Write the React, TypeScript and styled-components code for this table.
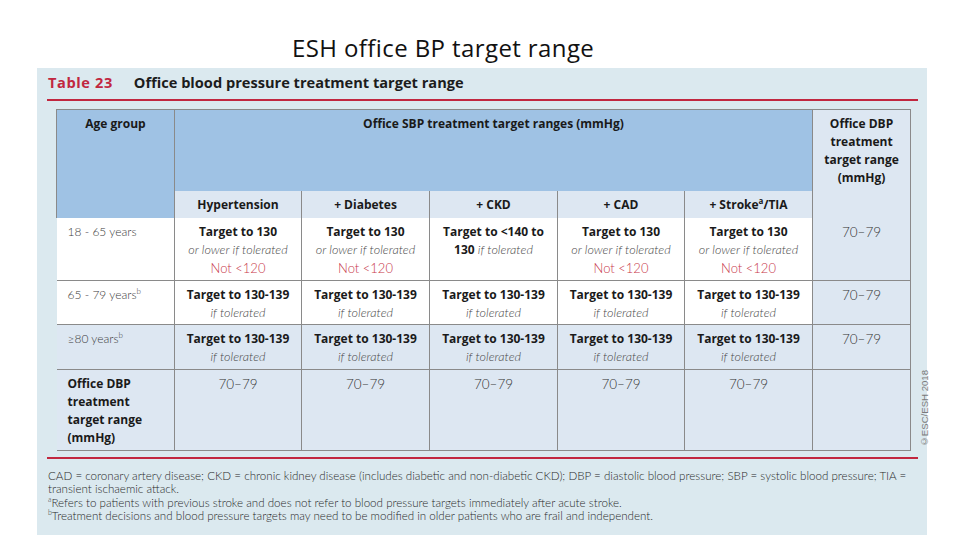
import styled, { createGlobalStyle } from "styled-components";

const GlobalStyle = createGlobalStyle`
  html, body {
    margin: 0;
    padding: 0;
    background: #ffffff;
  }
  body {
    width: 960px;
    height: 540px;
    overflow: hidden;
  }
`;

const Page = styled.div`
  width: 960px;
  height: 540px;
  display: flex;
  flex-direction: column;
`;

const SlideTitle = styled.h1`
  margin: 0;
  height: 68px;
  box-sizing: border-box;
  padding: 33px 0 0 292px;
  font-family: "Open Sans", "Noto Sans", sans-serif;
  font-weight: 400;
  font-size: 24px;
  line-height: 30px;
  color: #111;
  letter-spacing: 0.4px;
`;

const Panel = styled.div`
  margin-left: 37px;
  width: 890px;
  height: 467px;
  box-sizing: border-box;
  padding: 0 9px 0 10px;
  background: #dbe9ef;
  display: flex;
  flex-direction: column;
  font-family: Lato, "Open Sans", sans-serif;
`;

const Caption = styled.div`
  height: 33px;
  display: flex;
  align-items: center;
  gap: 21px;
  padding: 0 0 3px 1px;
  box-sizing: border-box;
  font-family: "Open Sans", sans-serif;
  font-weight: 700;
  font-size: 14.6px;
  color: #1c1c1c;
  border-bottom: 2px solid #c1273f;
`;

const TableNo = styled.span`
  color: #c1273f;
  letter-spacing: 0.6px;
`;

const Body = styled.div`
  display: flex;
  align-items: flex-end;
  padding: 8px 0 0 9px;
`;

const Table = styled.table`
  border-collapse: collapse;
  table-layout: fixed;
  width: 854px;
  font-size: 12px;
  color: #1a1a1a;
  border-top: 1px solid #8a8a8a;
  border-bottom: 1px solid #8a8a8a;
  border-right: 1px solid #8a8a8a;
`;

const HeadCell = styled.th<{ $tone: "dark" | "light" }>`
  background: ${(p) => (p.$tone === "dark" ? "#9fc2e4" : "#dde7f2")};
  border-left: 1px solid #8a8a8a;
  border-right: 1px solid #8a8a8a;
  font-family: "Open Sans", sans-serif;
  font-weight: 700;
  font-size: 12px;
  line-height: 18px;
  padding: 5px 2px 0;
  vertical-align: top;
  text-align: center;
`;

const SubHead = styled.th`
  background: #dde7f2;
  border-left: 1px solid #8a8a8a;
  border-right: 1px solid #8a8a8a;
  font-family: "Open Sans", sans-serif;
  font-weight: 700;
  font-size: 12px;
  height: 27px;
  padding: 0 2px;
  vertical-align: middle;
  text-align: center;
`;

const Row = styled.tr<{ $tone: "white" | "light"; $h: number; $ruled?: boolean }>`
  height: ${(p) => p.$h}px;
  background: ${(p) => (p.$tone === "white" ? "#ffffff" : "#dde7f2")};
  td {
    border-top: ${(p) => (p.$ruled ? "1px solid #8a8a8a" : "none")};
  }
`;

const Cell = styled.td<{ $dbp?: boolean }>`
  background: ${(p) => (p.$dbp ? "#dde7f2" : "transparent")};
  border-left: 1px solid #8a8a8a;
  border-right: 1px solid #8a8a8a;
  vertical-align: top;
  text-align: center;
  padding: 5px 1px 0;
  line-height: 18px;
`;

const AgeCell = styled.td<{ $bold?: boolean }>`
  border-right: 1px solid #8a8a8a;
  vertical-align: top;
  text-align: left;
  padding: 5px 4px 0 11px;
  line-height: 18px;
  font-family: ${(p) => (p.$bold ? `"Open Sans", sans-serif` : `Lato, sans-serif`)};
  font-weight: ${(p) => (p.$bold ? 700 : 300)};
  font-size: 12px;
  color: ${(p) => (p.$bold ? "#1a1a1a" : "#3a3a3a")};
`;

const Strong = styled.div`
  font-family: "Open Sans", sans-serif;
  font-weight: 700;
  white-space: nowrap;
`;

const Note = styled.div`
  font-style: italic;
  font-weight: 300;
  font-size: 12.6px;
  color: #4a4a4a;
  white-space: nowrap;
`;

const Warn = styled.div`
  font-weight: 300;
  font-size: 13px;
  color: #c8384a;
`;

const Range = styled.span`
  font-weight: 300;
  font-size: 13.5px;
  color: #333;
`;

const Sup = styled.sup`
  font-size: 8px;
  line-height: 0;
`;

const Copyright = styled.div`
  writing-mode: vertical-rl;
  transform: rotate(180deg);
  margin: 0 0 4px 8px;
  font-family: "Liberation Sans", Arial, sans-serif;
  font-size: 9.6px;
  color: #7a7a7a;
  white-space: nowrap;
`;

const BottomRule = styled.div`
  margin-top: 6px;
  height: 2px;
  background: #c1273f;
`;

const Footnotes = styled.div`
  padding: 10px 0 0 1px;
  font-size: 11.6px;
  line-height: 13.4px;
  font-weight: 300;
  color: #2a2a2a;
`;

const Para = styled.p`
  margin: 0;
`;

const Ref = styled.sup`
  font-size: 7px;
  line-height: 0;
`;

type Column = { head: React.ReactNode };

const columns: Column[] = [
  { head: "Hypertension" },
  { head: "+ Diabetes" },
  { head: "+ CKD" },
  { head: "+ CAD" },
  {
    head: (
      <>
        + Stroke<Sup>a</Sup>/TIA
      </>
    ),
  },
];

const Target130 = () => (
  <>
    <Strong>Target to 130</Strong>
    <Note>or lower if tolerated</Note>
    <Warn>Not &lt;120</Warn>
  </>
);

const Target139 = () => (
  <>
    <Strong>Target to 130-139</Strong>
    <Note>if tolerated</Note>
  </>
);

const youngRow = [
  <Target130 key="h" />,
  <Target130 key="d" />,
  <>
    <Strong>Target to &lt;140 to</Strong>
    <div>
      <Strong as="span">130</Strong> <Note as="span">if tolerated</Note>
    </div>
  </>,
  <Target130 key="c" />,
  <Target130 key="s" />,
];

export default function App() {
  return (
    <Page>
      <GlobalStyle />
      <SlideTitle>ESH office BP target range</SlideTitle>
      <Panel>
        <Caption>
          <TableNo>Table 23</TableNo>
          <span>Office blood pressure treatment target range</span>
        </Caption>
        <Body>
          <Table>
            <colgroup>
              <col style={{ width: 118 }} />
              <col style={{ width: 127 }} />
              <col style={{ width: 128 }} />
              <col style={{ width: 128 }} />
              <col style={{ width: 127 }} />
              <col style={{ width: 128 }} />
              <col style={{ width: 98 }} />
            </colgroup>
            <thead>
              <tr style={{ height: 81 }}>
                <HeadCell $tone="dark" rowSpan={2}>
                  Age group
                </HeadCell>
                <HeadCell $tone="dark" colSpan={5}>
                  Office SBP treatment target ranges (mmHg)
                </HeadCell>
                <HeadCell $tone="light" rowSpan={2}>
                  Office DBP
                  <br />
                  treatment
                  <br />
                  target range
                  <br />
                  (mmHg)
                </HeadCell>
              </tr>
              <tr>
                {columns.map((c, i) => (
                  <SubHead key={i}>{c.head}</SubHead>
                ))}
              </tr>
            </thead>
            <tbody>
              <Row $tone="white" $h={63}>
                <AgeCell>18 - 65 years</AgeCell>
                {youngRow.map((content, i) => (
                  <Cell key={i}>{content}</Cell>
                ))}
                <Cell $dbp>
                  <Range>70–79</Range>
                </Cell>
              </Row>
              <Row $tone="white" $h={44} $ruled>
                <AgeCell>
                  65 - 79 years<Sup>b</Sup>
                </AgeCell>
                {columns.map((_, i) => (
                  <Cell key={i}>
                    <Target139 />
                  </Cell>
                ))}
                <Cell $dbp>
                  <Range>70–79</Range>
                </Cell>
              </Row>
              <Row $tone="light" $h={45} $ruled>
                <AgeCell>
                  ≥80 years<Sup>b</Sup>
                </AgeCell>
                {columns.map((_, i) => (
                  <Cell key={i}>
                    <Target139 />
                  </Cell>
                ))}
                <Cell $dbp>
                  <Range>70–79</Range>
                </Cell>
              </Row>
              <Row $tone="light" $h={81} $ruled>
                <AgeCell $bold>
                  Office DBP
                  <br />
                  treatment
                  <br />
                  target range
                  <br />
                  (mmHg)
                </AgeCell>
                {columns.map((_, i) => (
                  <Cell key={i}>
                    <Range>70–79</Range>
                  </Cell>
                ))}
                <Cell $dbp />
              </Row>
            </tbody>
          </Table>
          <Copyright>©ESC/ESH 2018</Copyright>
        </Body>
        <BottomRule />
        <Footnotes>
          <Para>
            CAD = coronary artery disease; CKD = chronic kidney disease (includes diabetic and
            non-diabetic CKD); DBP = diastolic blood pressure; SBP = systolic blood pressure; TIA =
            transient ischaemic attack.
          </Para>
          <Para>
            <Ref>a</Ref>Refers to patients with previous stroke and does not refer to blood pressure
            targets immediately after acute stroke.
          </Para>
          <Para>
            <Ref>b</Ref>Treatment decisions and blood pressure targets may need to be modified in
            older patients who are frail and independent.
          </Para>
        </Footnotes>
      </Panel>
    </Page>
  );
}
